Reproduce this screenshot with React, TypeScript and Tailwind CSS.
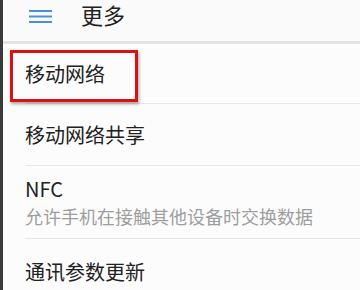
import React from "react";

const font = { fontFamily: '"Noto Sans CJK SC", "Noto Sans", Roboto, sans-serif' };

function Row({ title, sub, h }: { title: string; sub?: string; h: string }) {
  return (
    <div className={`${h} flex flex-col justify-center ml-[22px] border-b border-[#e6e6e6]`}>
      <div className="text-[20px] leading-[24px] text-[#212121]">{title}</div>
      {sub && <div className="text-[18px] leading-[22px] text-[#9e9e9e] mt-[4px]">{sub}</div>}
    </div>
  );
}

export default function App() {
  return (
    <div className="w-[360px] h-[290px] overflow-hidden flex bg-[#fcfcfc]" style={font}>
      <div className="w-[3px] bg-[#3a3a3a] shrink-0" />
      <div className="flex-1 relative">
        <div className="h-[41px] bg-[#fafafa] flex items-start border-b-[3px] border-[#e3e3e3] box-content">
          <svg width="24" height="14" viewBox="0 0 24 14" className="ml-[26px] mt-[10px]">
            <rect x="0" y="0" width="23" height="2" fill="#4a8fd8" />
            <rect x="0" y="5.5" width="23" height="2" fill="#4a8fd8" />
            <rect x="0" y="11" width="23" height="2" fill="#4a8fd8" />
          </svg>
          <span className="ml-[28px] text-[22px] leading-[24px] text-[#212121] mt-[2px]">更多</span>
        </div>
        <Row title="移动网络" h="h-[60px]" />
        <Row title="移动网络共享" h="h-[62px]" />
        <Row title="NFC" sub="允许手机在接触其他设备时交换数据" h="h-[73px]" />
        <Row title="通讯参数更新" h="h-[66px]" />
        <div className="absolute left-[7px] top-[50px] w-[128px] h-[52px] border-[3px] border-[#dd1111] shadow-[1px_2px_3px_rgba(0,0,0,0.35)]" />
      </div>
    </div>
  );
}
